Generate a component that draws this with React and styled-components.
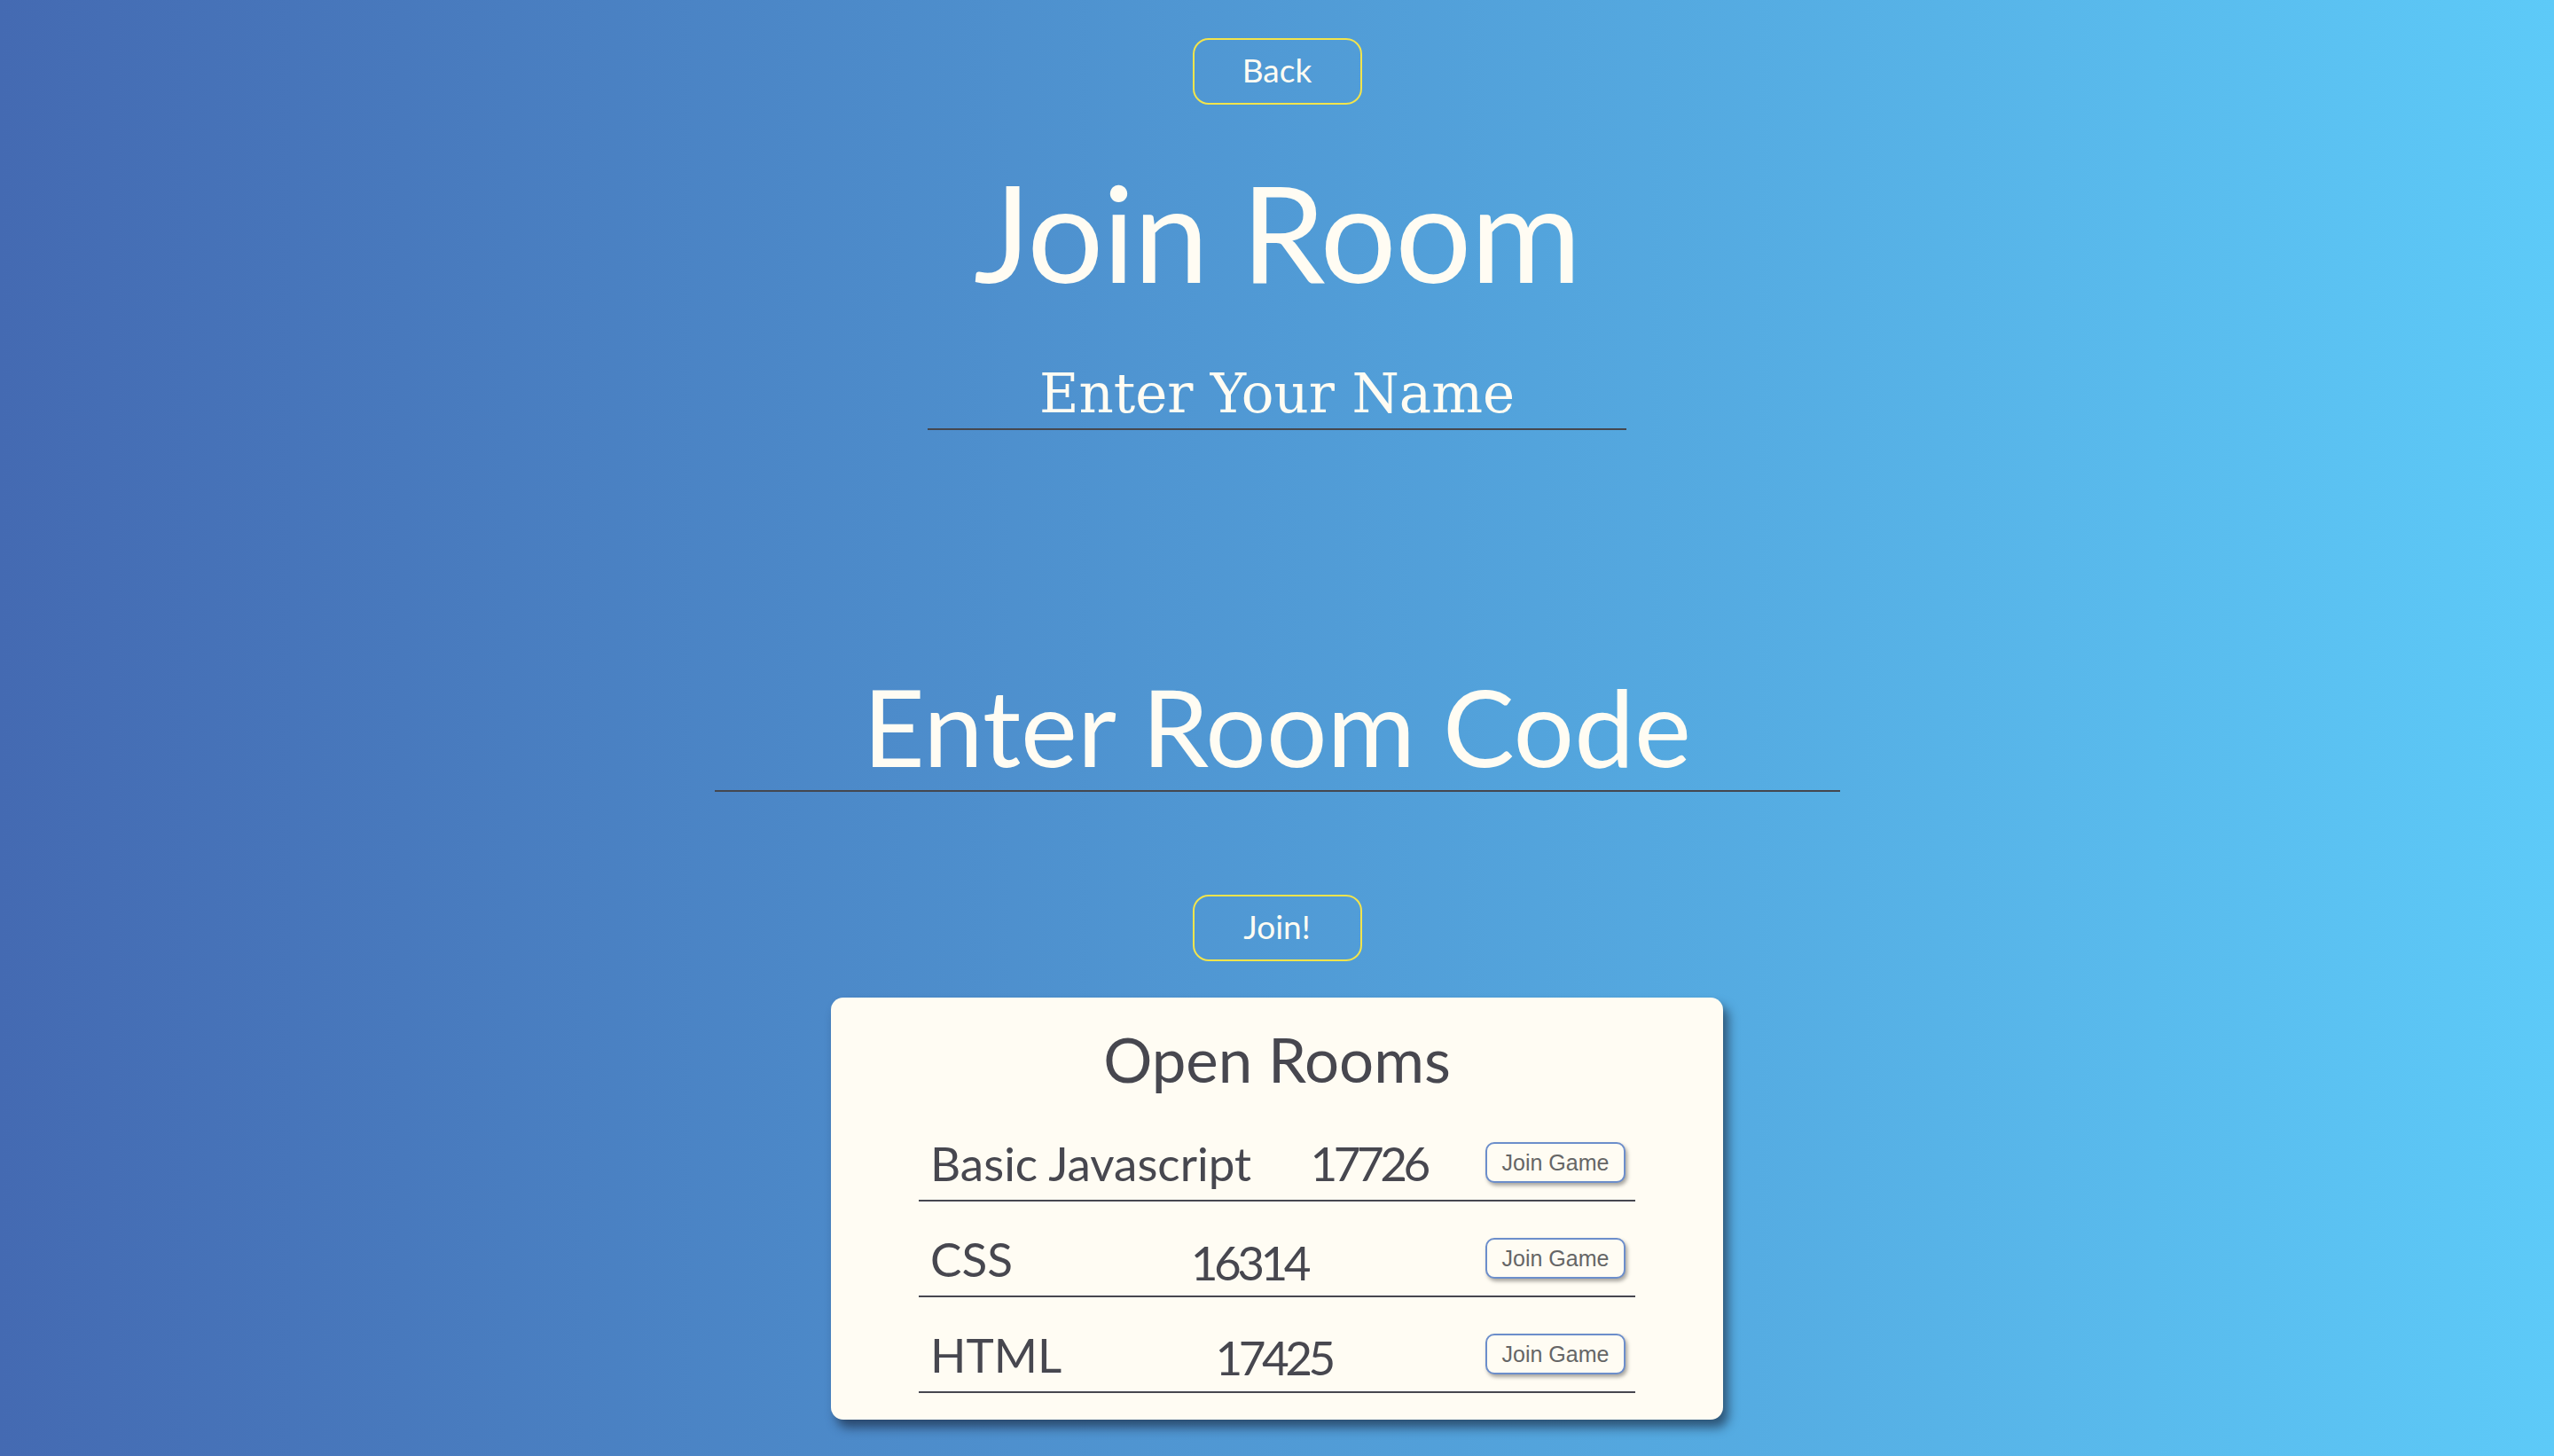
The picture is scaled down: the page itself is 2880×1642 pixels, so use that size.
import React from "react";
import styled, { createGlobalStyle } from "styled-components";

const GlobalStyle = createGlobalStyle`
  html, body {
    margin: 0;
    padding: 0;
  }
  body {
    font-family: Lato, "Open Sans", sans-serif;
  }
`;

const Page = styled.div`
  min-height: 1642px;
  box-sizing: border-box;
  padding-top: 43px;
  display: flex;
  flex-direction: column;
  align-items: center;
  background: linear-gradient(to right, #446ab2, #5dcaf8);
  color: #fffcf3;
`;

const OutlineButton = styled.button`
  width: 191px;
  height: 75px;
  box-sizing: border-box;
  margin-top: ${(props) => props.$mt || 0}px;
  padding: 0 0 5px;
  border: 2px solid #f3e44b;
  border-radius: 18px;
  background: transparent;
  color: #fffcf3;
  font-family: Lato, sans-serif;
  font-size: 37px;
  cursor: pointer;
`;

const Title = styled.h1`
  margin: 51px 0 0;
  font-size: 152px;
  line-height: 1.2;
  font-weight: 400;
  letter-spacing: -1.3px;
`;

const LineInput = styled.input`
  box-sizing: border-box;
  width: ${(props) => props.$width}px;
  height: ${(props) => props.$height}px;
  margin-top: ${(props) => props.$mt}px;
  padding: 0;
  border: none;
  border-bottom: 2px solid #44474f;
  background: transparent;
  outline: none;
  text-align: center;
  color: #fffcf3;
  font-family: ${(props) => (props.$serif ? '"DejaVu Serif", serif' : "Lato, sans-serif")};
  font-size: ${(props) => props.$size}px;
  &::placeholder {
    color: #fffcf3;
    opacity: 1;
  }
`;

const Card = styled.div`
  width: 1006px;
  box-sizing: border-box;
  margin-top: 41px;
  padding: 30px 99px;
  background: #fffcf3;
  border-radius: 14px;
  box-shadow: 6px 9px 12px rgba(20, 30, 50, 0.6);
  color: #47474f;
`;

const CardTitle = styled.h2`
  margin: 0 0 12px;
  font-size: 69px;
  line-height: 1.16;
  font-weight: 400;
  text-align: center;
`;

const Row = styled.div`
  height: 108px;
  box-sizing: border-box;
  padding: 22px 11px 0 13px;
  display: flex;
  justify-content: space-between;
  align-items: center;
  border-bottom: 2px solid #47474f;
`;

const RoomText = styled.span`
  font-size: 53px;
  line-height: 1.2;
  position: relative;
  top: ${(props) => props.$drop || 0}px;
  letter-spacing: ${(props) => (props.$code ? "-4.5px" : "0")};
`;

const JoinGame = styled.button`
  width: 158px;
  height: 46px;
  box-sizing: border-box;
  border: 2px solid #6c8ecb;
  border-radius: 10px;
  background: #fffcf3;
  color: #666;
  font-family: "Liberation Sans", Arial, sans-serif;
  font-size: 25px;
  box-shadow: 2px 3px 4px rgba(0, 0, 0, 0.35);
  cursor: pointer;
`;

const rooms = [
  { name: "Basic Javascript", code: "17726", drop: 0 },
  { name: "CSS", code: "16314", drop: 4 },
  { name: "HTML", code: "17425", drop: 3 },
];

const App = () => {
  return (
    <>
      <GlobalStyle />
      <Page>
        <OutlineButton>Back</OutlineButton>
        <Title>Join Room</Title>
        <LineInput $serif $width={788} $height={82} $mt={52} $size={61} placeholder="Enter Your Name" />
        <LineInput $width={1269} $height={147} $mt={261} $size={121} placeholder="Enter Room Code" />
        <OutlineButton $mt={116}>Join!</OutlineButton>
        <Card>
          <CardTitle>Open Rooms</CardTitle>
          {rooms.map((room) => (
            <Row key={room.code}>
              <RoomText>{room.name}</RoomText>
              <RoomText $code $drop={room.drop}>{room.code}</RoomText>
              <JoinGame>Join Game</JoinGame>
            </Row>
          ))}
        </Card>
      </Page>
    </>
  );
};

export default App;
